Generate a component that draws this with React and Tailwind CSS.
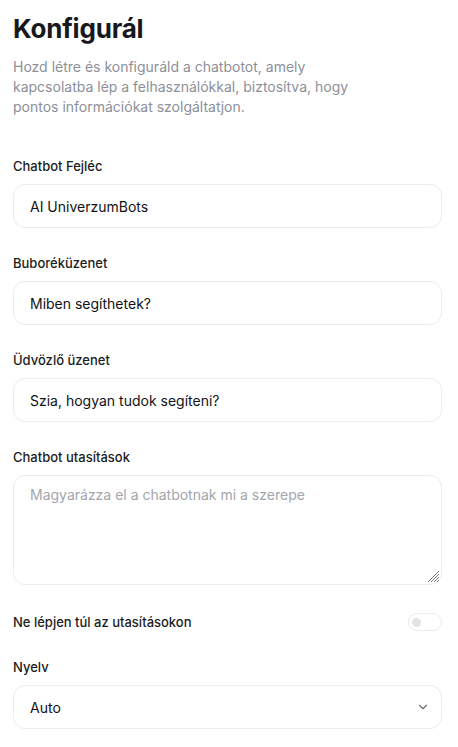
import React, { useState } from 'react';

const inputClass =
  'block w-full h-[44px] rounded-[12px] border border-[#ececef] bg-white px-[16px] text-[14px] text-[#111318] outline-none placeholder:text-[#a3a6ad]';

const Field = ({ label, children }) => (
  <div className="flex flex-col">
    <label className="text-[13px] leading-[20px] font-medium text-[#1b1d22]">{label}</label>
    <div className="mt-[8px]">{children}</div>
  </div>
);

const App = () => {
  const [form, setForm] = useState({
    header: 'AI UniverzumBots',
    bubble: 'Miben segíthetek?',
    welcome: 'Szia, hogyan tudok segíteni?',
    instructions: '',
    strict: false,
    language: 'auto'
  });

  const handleChange = (e) => {
    const { name, value } = e.target;
    setForm(prev => ({ ...prev, [name]: value }));
  };

  return (
    <div className="min-h-screen bg-white pl-[13px] pr-[16px] pt-[13px] pb-6 font-['Inter',sans-serif]">
      <h1 className="text-[26px] leading-[32px] font-bold tracking-[-0.2px] text-[#17181c]">Konfigurál</h1>
      <p className="mt-[12px] max-w-[350px] text-[14px] leading-[20px] text-[#8c9099]">
        Hozd létre és konfiguráld a chatbotot, amely kapcsolatba lép a felhasználókkal, biztosítva, hogy
        pontos információkat szolgáltatjon.
      </p>

      <div className="mt-[39px] flex flex-col gap-[25px]">
        <Field label="Chatbot Fejléc">
          <input name="header" value={form.header} onChange={handleChange} className={inputClass} />
        </Field>
        <Field label="Buboréküzenet">
          <input name="bubble" value={form.bubble} onChange={handleChange} className={inputClass} />
        </Field>
        <Field label="Üdvözlő üzenet">
          <input name="welcome" value={form.welcome} onChange={handleChange} className={inputClass} />
        </Field>
        <Field label="Chatbot utasítások">
          <div className="relative">
            <textarea
              name="instructions"
              value={form.instructions}
              onChange={handleChange}
              placeholder="Magyarázza el a chatbotnak mi a szerepe"
              className="block w-full h-[110px] resize-none rounded-[12px] border border-[#ececef] bg-white px-[16px] py-[9px] text-[14px] leading-[20px] text-[#111318] outline-none placeholder:text-[#a3a6ad]"
            />
            {/* resize grip */}
            <svg
              className="pointer-events-none absolute right-[2px] bottom-[2px]"
              width="14"
              height="14"
              viewBox="0 0 14 14"
              stroke="#6f7278"
              strokeWidth="1"
            >
              <path d="M13 2L2 13M13 5L5 13M13 8L8 13M13 11L11 13" />
            </svg>
          </div>
        </Field>

        <div className="mt-[2px] flex items-center justify-between">
          <span className="text-[13px] leading-[20px] font-medium text-[#1b1d22]">Ne lépjen túl az utasításokon</span>
          <button
            type="button"
            onClick={() => setForm(prev => ({ ...prev, strict: !prev.strict }))}
            className="flex h-[18px] w-[34px] items-center rounded-full border border-[#ececef] bg-white px-[3px]"
          >
            <span className="h-[9px] w-[9px] rounded-full bg-[#e3e4e7]" />
          </button>
        </div>

        <Field label="Nyelv">
          <div className="relative">
            <select
              name="language"
              value={form.language}
              onChange={handleChange}
              className={inputClass + ' appearance-none'}
            >
              <option value="auto">Auto</option>
              <option value="hu">Magyar</option>
              <option value="en">English</option>
            </select>
            <svg
              className="pointer-events-none absolute right-[12px] top-1/2 -translate-y-1/2"
              width="14"
              height="14"
              viewBox="0 0 24 24"
              fill="none"
              stroke="#6b6f78"
              strokeWidth="2"
              strokeLinecap="round"
              strokeLinejoin="round"
            >
              <path d="M6 9l6 6 6-6" />
            </svg>
          </div>
        </Field>
      </div>
    </div>
  );
};

export default App;
